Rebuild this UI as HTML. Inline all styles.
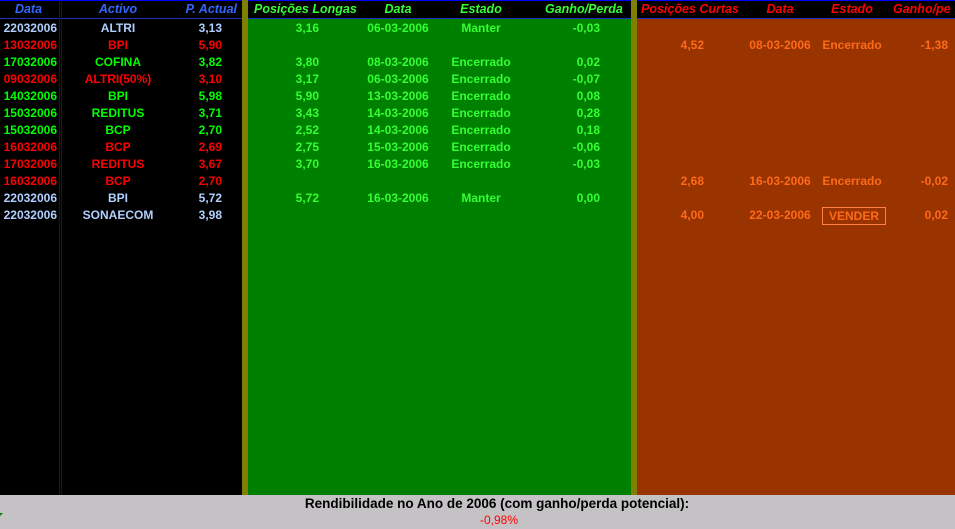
<!DOCTYPE html>
<html><head><meta charset="utf-8"><style>
*{margin:0;padding:0;box-sizing:border-box}
body{width:955px;height:529px;overflow:hidden;background:#000;font-family:"Liberation Sans",Arial,sans-serif;font-size:12px;font-weight:bold;position:relative}
.bg{position:absolute}
.r{position:absolute;left:0;width:955px;height:17px;line-height:17px}
.r span{position:absolute;white-space:nowrap}
.a{left:0;width:57px;text-align:right}
.b{left:62px;width:112px;text-align:center}
.c{left:175px;width:47px;text-align:right}
.d{left:250px;width:69px;text-align:right}
.e{left:360px;width:76px;text-align:center}
.f{left:440px;width:82px;text-align:center}
.g{left:530px;width:70px;text-align:right}
.h{left:640px;width:64px;text-align:right}
.i{left:742px;width:76px;text-align:center}
.j{left:815px;width:74px;text-align:center}
.k{left:890px;width:58px;text-align:right}
.hd span{font-style:italic;font-size:12.5px}
.W{color:#b0d0ff}.R{color:#ff0000}.G{color:#00ff00}.L{color:#33ff33}.O{color:#ff6a1a}
</style></head><body>
<div class="bg" style="left:0;top:0;width:955px;height:1px;background:#0000ff"></div>
<div class="bg" style="left:0;top:18px;width:955px;height:1px;background:#2030c0"></div>
<div class="bg" style="left:59px;top:0;width:1px;height:495px;background:#0000e0"></div>
<div class="bg" style="left:61px;top:0;width:1px;height:495px;background:#0000e0"></div>
<div class="bg" style="left:242px;top:0;width:6px;height:495px;background:#808000"></div>
<div class="bg" style="left:248px;top:19px;width:383px;height:476px;background:#008000"></div>
<div class="bg" style="left:631px;top:0;width:6px;height:495px;background:#808000"></div>
<div class="bg" style="left:637px;top:19px;width:318px;height:476px;background:#993300"></div>
<div class="bg" style="left:0;top:495px;width:955px;height:34px;background:#c4c2c4"></div>

<div class="r hd" style="top:1px">
<span class="a" style="color:#3366ff;text-align:center;width:57px">Data</span>
<span class="b" style="color:#3366ff">Activo</span>
<span class="c" style="color:#3366ff;left:170px;width:67px">P. Actual</span>
<span style="left:254px;width:110px;color:#33ff33">Posições Longas</span>
<span class="e L">Data</span><span class="f L">Estado</span>
<span style="left:545px;color:#33ff33">Ganho/Perda</span>
<span style="left:641px;color:#ff0000">Posições Curtas</span>
<span class="i R" style="left:742px">Data</span><span class="j R" style="left:815px">Estado</span>
<span style="left:893px;color:#ff0000">Ganho/pe</span>
</div>

<div class="r" style="top:20px"><span class="a W">22032006</span><span class="b W">ALTRI</span><span class="c W">3,13</span><span class="d L">3,16</span><span class="e L">06-03-2006</span><span class="f L">Manter</span><span class="g L">-0,03</span></div>
<div class="r" style="top:37px"><span class="a R">13032006</span><span class="b R">BPI</span><span class="c R">5,90</span><span class="h O">4,52</span><span class="i O">08-03-2006</span><span class="j O">Encerrado</span><span class="k O">-1,38</span></div>
<div class="r" style="top:54px"><span class="a G">17032006</span><span class="b G">COFINA</span><span class="c G">3,82</span><span class="d L">3,80</span><span class="e L">08-03-2006</span><span class="f L">Encerrado</span><span class="g L">0,02</span></div>
<div class="r" style="top:71px"><span class="a R">09032006</span><span class="b R">ALTRI(50%)</span><span class="c R">3,10</span><span class="d L">3,17</span><span class="e L">06-03-2006</span><span class="f L">Encerrado</span><span class="g L">-0,07</span></div>
<div class="r" style="top:88px"><span class="a G">14032006</span><span class="b G">BPI</span><span class="c G">5,98</span><span class="d L">5,90</span><span class="e L">13-03-2006</span><span class="f L">Encerrado</span><span class="g L">0,08</span></div>
<div class="r" style="top:105px"><span class="a G">15032006</span><span class="b G">REDITUS</span><span class="c G">3,71</span><span class="d L">3,43</span><span class="e L">14-03-2006</span><span class="f L">Encerrado</span><span class="g L">0,28</span></div>
<div class="r" style="top:122px"><span class="a G">15032006</span><span class="b G">BCP</span><span class="c G">2,70</span><span class="d L">2,52</span><span class="e L">14-03-2006</span><span class="f L">Encerrado</span><span class="g L">0,18</span></div>
<div class="r" style="top:139px"><span class="a R">16032006</span><span class="b R">BCP</span><span class="c R">2,69</span><span class="d L">2,75</span><span class="e L">15-03-2006</span><span class="f L">Encerrado</span><span class="g L">-0,06</span></div>
<div class="r" style="top:156px"><span class="a R">17032006</span><span class="b R">REDITUS</span><span class="c R">3,67</span><span class="d L">3,70</span><span class="e L">16-03-2006</span><span class="f L">Encerrado</span><span class="g L">-0,03</span></div>
<div class="r" style="top:173px"><span class="a R">16032006</span><span class="b R">BCP</span><span class="c R">2,70</span><span class="h O">2,68</span><span class="i O">16-03-2006</span><span class="j O">Encerrado</span><span class="k O">-0,02</span></div>
<div class="r" style="top:190px"><span class="a W">22032006</span><span class="b W">BPI</span><span class="c W">5,72</span><span class="d L">5,72</span><span class="e L">16-03-2006</span><span class="f L">Manter</span><span class="g L">0,00</span></div>
<div class="r" style="top:207px"><span class="a W">22032006</span><span class="b W">SONAECOM</span><span class="c W">3,98</span><span class="h O">4,00</span><span class="i O">22-03-2006</span><span class="O" style="left:822px;width:64px;height:18px;line-height:16px;border:1px solid #ff8040;text-align:center">VENDER</span><span class="k O">0,02</span></div>

<div style="position:absolute;left:0;top:496px;width:994px;text-align:center;line-height:16px;color:#000;font-size:13.5px">Rendibilidade no Ano de 2006 (com ganho/perda potencial):</div>
<div style="position:absolute;left:0;top:512px;width:998px;text-align:center;line-height:16px;color:#ff0000;font-weight:normal">-0,98%</div>
<div style="position:absolute;left:0;top:513px;width:0;height:0;border-top:3px solid #008000;border-right:3px solid transparent"></div>
</body></html>
